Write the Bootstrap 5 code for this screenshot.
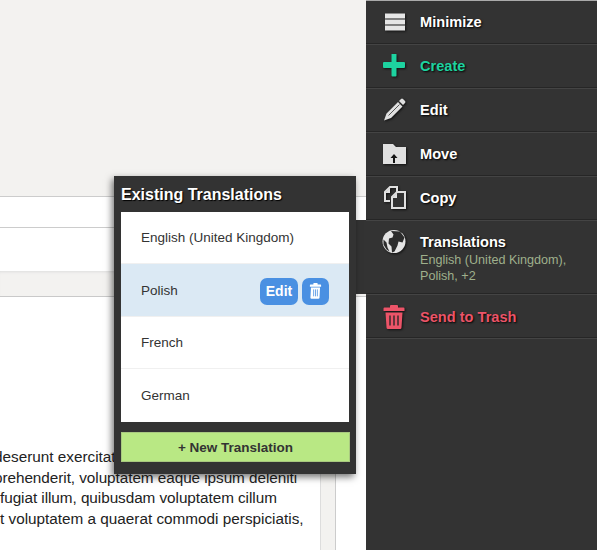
<!doctype html>
<html lang="en"><head><meta charset="utf-8">
<link rel="stylesheet" href="https://cdn.jsdelivr.net/npm/bootstrap@5.3.0/dist/css/bootstrap.min.css">
<style>
html,body{height:550px;overflow:hidden}
body{position:relative;background:#f3f2f0;font-family:"Liberation Sans",Arial,sans-serif;color:#333}
.stage{width:366px;height:550px;overflow:hidden}
.topgap{height:196px}
.field{background:#fff;height:31px;border-top:1px solid #ccc}
.field2{background:#fff;height:44px;border-top:1px solid #ccc}
.band{height:26px;background:#f3f2f0;box-shadow:inset 0 3px 3px -2px #ddd;border-bottom:1px solid #c9c9c9}
.docrow{height:253px;display:flex}
.docpage{width:320px;height:253px;background:#fff;overflow:hidden;padding-top:150px;flex:none}
.doctext{font-size:15.3px;line-height:20.7px;color:#222;white-space:nowrap;margin:0}
.doctext span{display:block}
.doctext .ln-a{margin-left:-6px}
.doctext .ln-b{margin-left:-6px;letter-spacing:-.05px}
.doctext .ln-c{letter-spacing:-.05px}
.gutter{width:16px;border-left:1px solid #ddd;border-right:1px solid #ccc;flex:none}
.sideright{flex:1;background:#fff}
.rail{position:absolute;left:366px;top:0;width:231px;height:550px;background:#333;box-shadow:inset 0 1px 0 #aaa}
.rail-item{display:flex;align-items:flex-start;border-bottom:1px solid #262626;box-shadow:0 1px 0 #444;height:44px;padding:0 0 0 16px;color:#fff;font-weight:700;font-size:14.6px;text-shadow:1px 1px 2px #000}
.rail-ico{width:24px;height:24px;margin-right:14px;margin-top:10px;flex:none;filter:drop-shadow(1px 1px 1px #111)}
.rail-label{margin-top:13px;line-height:18px}
.rail-item.is-tall{height:74px}
.rail-sub{font-weight:400;font-size:12.6px;line-height:16px;color:#9fb08c;text-shadow:none;margin-top:1px}
.is-green{color:#1dd3a0}
.is-red{color:#ec5468}
.rail-item.is-red .rail-label{margin-top:14px}
.rail-item.is-red .rail-ico{margin-top:11px}
.bridge{position:absolute;left:349px;top:220px;width:17px;height:74px;background:#333}
.popover-box{position:absolute;left:114px;top:176px;width:242px;height:298px;background:#333;box-shadow:-2px 3px 7px rgba(0,0,0,.55);padding:0 7px}
.popover-title{color:#fff;font-weight:700;font-size:16px;line-height:20px;padding-top:9px;height:36px;text-shadow:1px 1px 1px #000;margin:0}
.lang-list{background:#fff;height:210px;border-radius:0;width:228px}
.lang-list .list-group-item{height:52px;padding:2px 20px 0;border:0;border-bottom:1px solid #f0f0f0;font-size:13.5px;color:#333;display:flex;align-items:center;justify-content:space-between;border-radius:0;background:#fff}
.lang-list .list-group-item:nth-child(2){height:53px}
.lang-list .list-group-item:last-child{border-bottom:0;height:53px}
.lang-list .list-group-item.is-hover{background:#dbe9f4}
.mini{background:#4a90e2;color:#fff;border:0;border-radius:7px;height:27px;font-weight:700;font-size:14px;padding:0;display:inline-flex;align-items:center;justify-content:center}
.mini-edit{width:38px}
.mini-del{width:27px}
.new-btn{display:block;width:229px;height:30px;margin-top:10px;background:#b9e884;border:1px solid #a9c980;border-radius:0;color:#333;font-weight:700;font-size:13.5px;padding:2px 0 0;line-height:26px}
</style></head><body>
<div class="stage">
<div class="topgap"></div>
<div class="field"></div>
<div class="field2"></div>
<div class="band"></div>
<div class="docrow"><div class="docpage"><p class="doctext"><span class="ln-a">deserunt exercitationem</span><span class="ln-b">prehenderit, voluptatem eaque ipsum deleniti</span><span class="ln-c">fugiat illum, quibusdam voluptatem cillum</span><span>t voluptatem a quaerat commodi perspiciatis,</span></p></div><div class="gutter"></div><div class="sideright"></div></div>
</div>
<div class="bridge"></div>
<nav class="rail">
<div class="rail-item"><svg class="rail-ico" viewBox="0 0 24 24"><path fill="#e6e6e6" d="M3 3.500h20v5H3zM3 9.500h20v5H3zM3 15.500h20v5H3z"/></svg><div class="rail-label">Minimize</div></div>
<div class="rail-item is-green"><svg class="rail-ico" viewBox="0 0 24 24"><path fill="#1dd3a0" d="M9.500 .5q0-1 1-1h3q1 0 1 1V8h7.500q1 0 1 1v4q0 1-1 1h-7.500v7.500q0 1-1 1h-3q-1 0-1-1V14H2q-1 0-1-1V9q0-1 1-1h7.500z"/></svg><div class="rail-label">Create</div></div>
<div class="rail-item"><svg class="rail-ico" viewBox="0 0 24 24"><path fill="#e0e0e0" d="M2 22.500l2.500-7L16 4l4.500 4.500L9 20zM17 3l2-2q1-1 2 0l2 2q1 1 0 2l-2 2z"/><path stroke="#555" stroke-width="1" fill="none" d="M6.500 17.500L17.500 6.500"/></svg><div class="rail-label">Edit</div></div>
<div class="rail-item"><svg class="rail-ico" viewBox="0 0 24 24"><path fill="#e0e0e0" d="M1 2h10l3 3h10v17H1z"/><path fill="#151515" d="M12 12l3.500 4H13v5h-2v-5H8.500z"/></svg><div class="rail-label">Move</div></div>
<div class="rail-item"><svg class="rail-ico" viewBox="0 0 24 24"><path fill="none" stroke="#e0e0e0" stroke-width="2" d="M8 15H3V6l5-5h7v5"/><path fill="#333" stroke="#e0e0e0" stroke-width="2" d="M10 11l5-5h8v16H10z"/><path fill="#e0e0e0" d="M8 2v5H3zM15 7v5h-5z"/></svg><div class="rail-label">Copy</div></div>
<div class="rail-item is-tall"><svg class="rail-ico" viewBox="0 0 24 24"><circle cx="12" cy="11.500" r="11.500" fill="#e4e4e4"/><path fill="#2c2c2c" d="M9 1l9 .5 4.500 6-2 5-4-1-1 4-3 6-2.500 1-.5-6-3-3 .5-5 3.500-1 1-3zM1.500 9.500l3 3 1 5 2 4-3-2-3-5z"/></svg><div class="rail-label">Translations<div class="rail-sub">English (United Kingdom),<br>Polish, +2</div></div></div>
<div class="rail-item is-red"><svg class="rail-ico" viewBox="0 0 24 24"><path fill="#ec5468" d="M9 0h6q1 0 1 1v1.500h5.500q1 0 1 1V6h-21V3.500q0-1 1-1H8V1q0-1 1-1zM3.500 7.500h17l-1 15q0 1.500-1.500 1.500H6q-1.500 0-1.500-1.500z"/><path stroke="#3a2a2c" stroke-width="1.500" d="M8 10.500v10M12 10.500v10M16 10.500v10"/></svg><div class="rail-label">Send to Trash</div></div>
</nav>
<section class="popover-box">
<h2 class="popover-title">Existing Translations</h2>
<ul class="list-group lang-list">
<li class="list-group-item">English (United Kingdom)</li>
<li class="list-group-item is-hover">Polish<span class="d-flex gap-1"><button class="mini mini-edit">Edit</button><button class="mini mini-del" aria-label="Delete"><svg width="13" height="16" viewBox="0 0 24 30"><path fill="#fff" d="M9 0h6q1 0 1 1v2h5.500q1 0 1 1v3h-21V4q0-1 1-1H8V1q0-1 1-1zM3.500 8.500h17l-1 19q0 2-2 2h-13q-2 0-2-2z"/><path stroke="#4a90e2" stroke-width="1.500" d="M8.500 12v13M12 12v13M15.500 12v13"/></svg></button></span></li>
<li class="list-group-item">French</li>
<li class="list-group-item">German</li>
</ul>
<button class="btn new-btn">+ New Translation</button>
</section>
<script src="https://cdn.jsdelivr.net/npm/bootstrap@5.3.0/dist/js/bootstrap.bundle.min.js"></script>
</body></html>
